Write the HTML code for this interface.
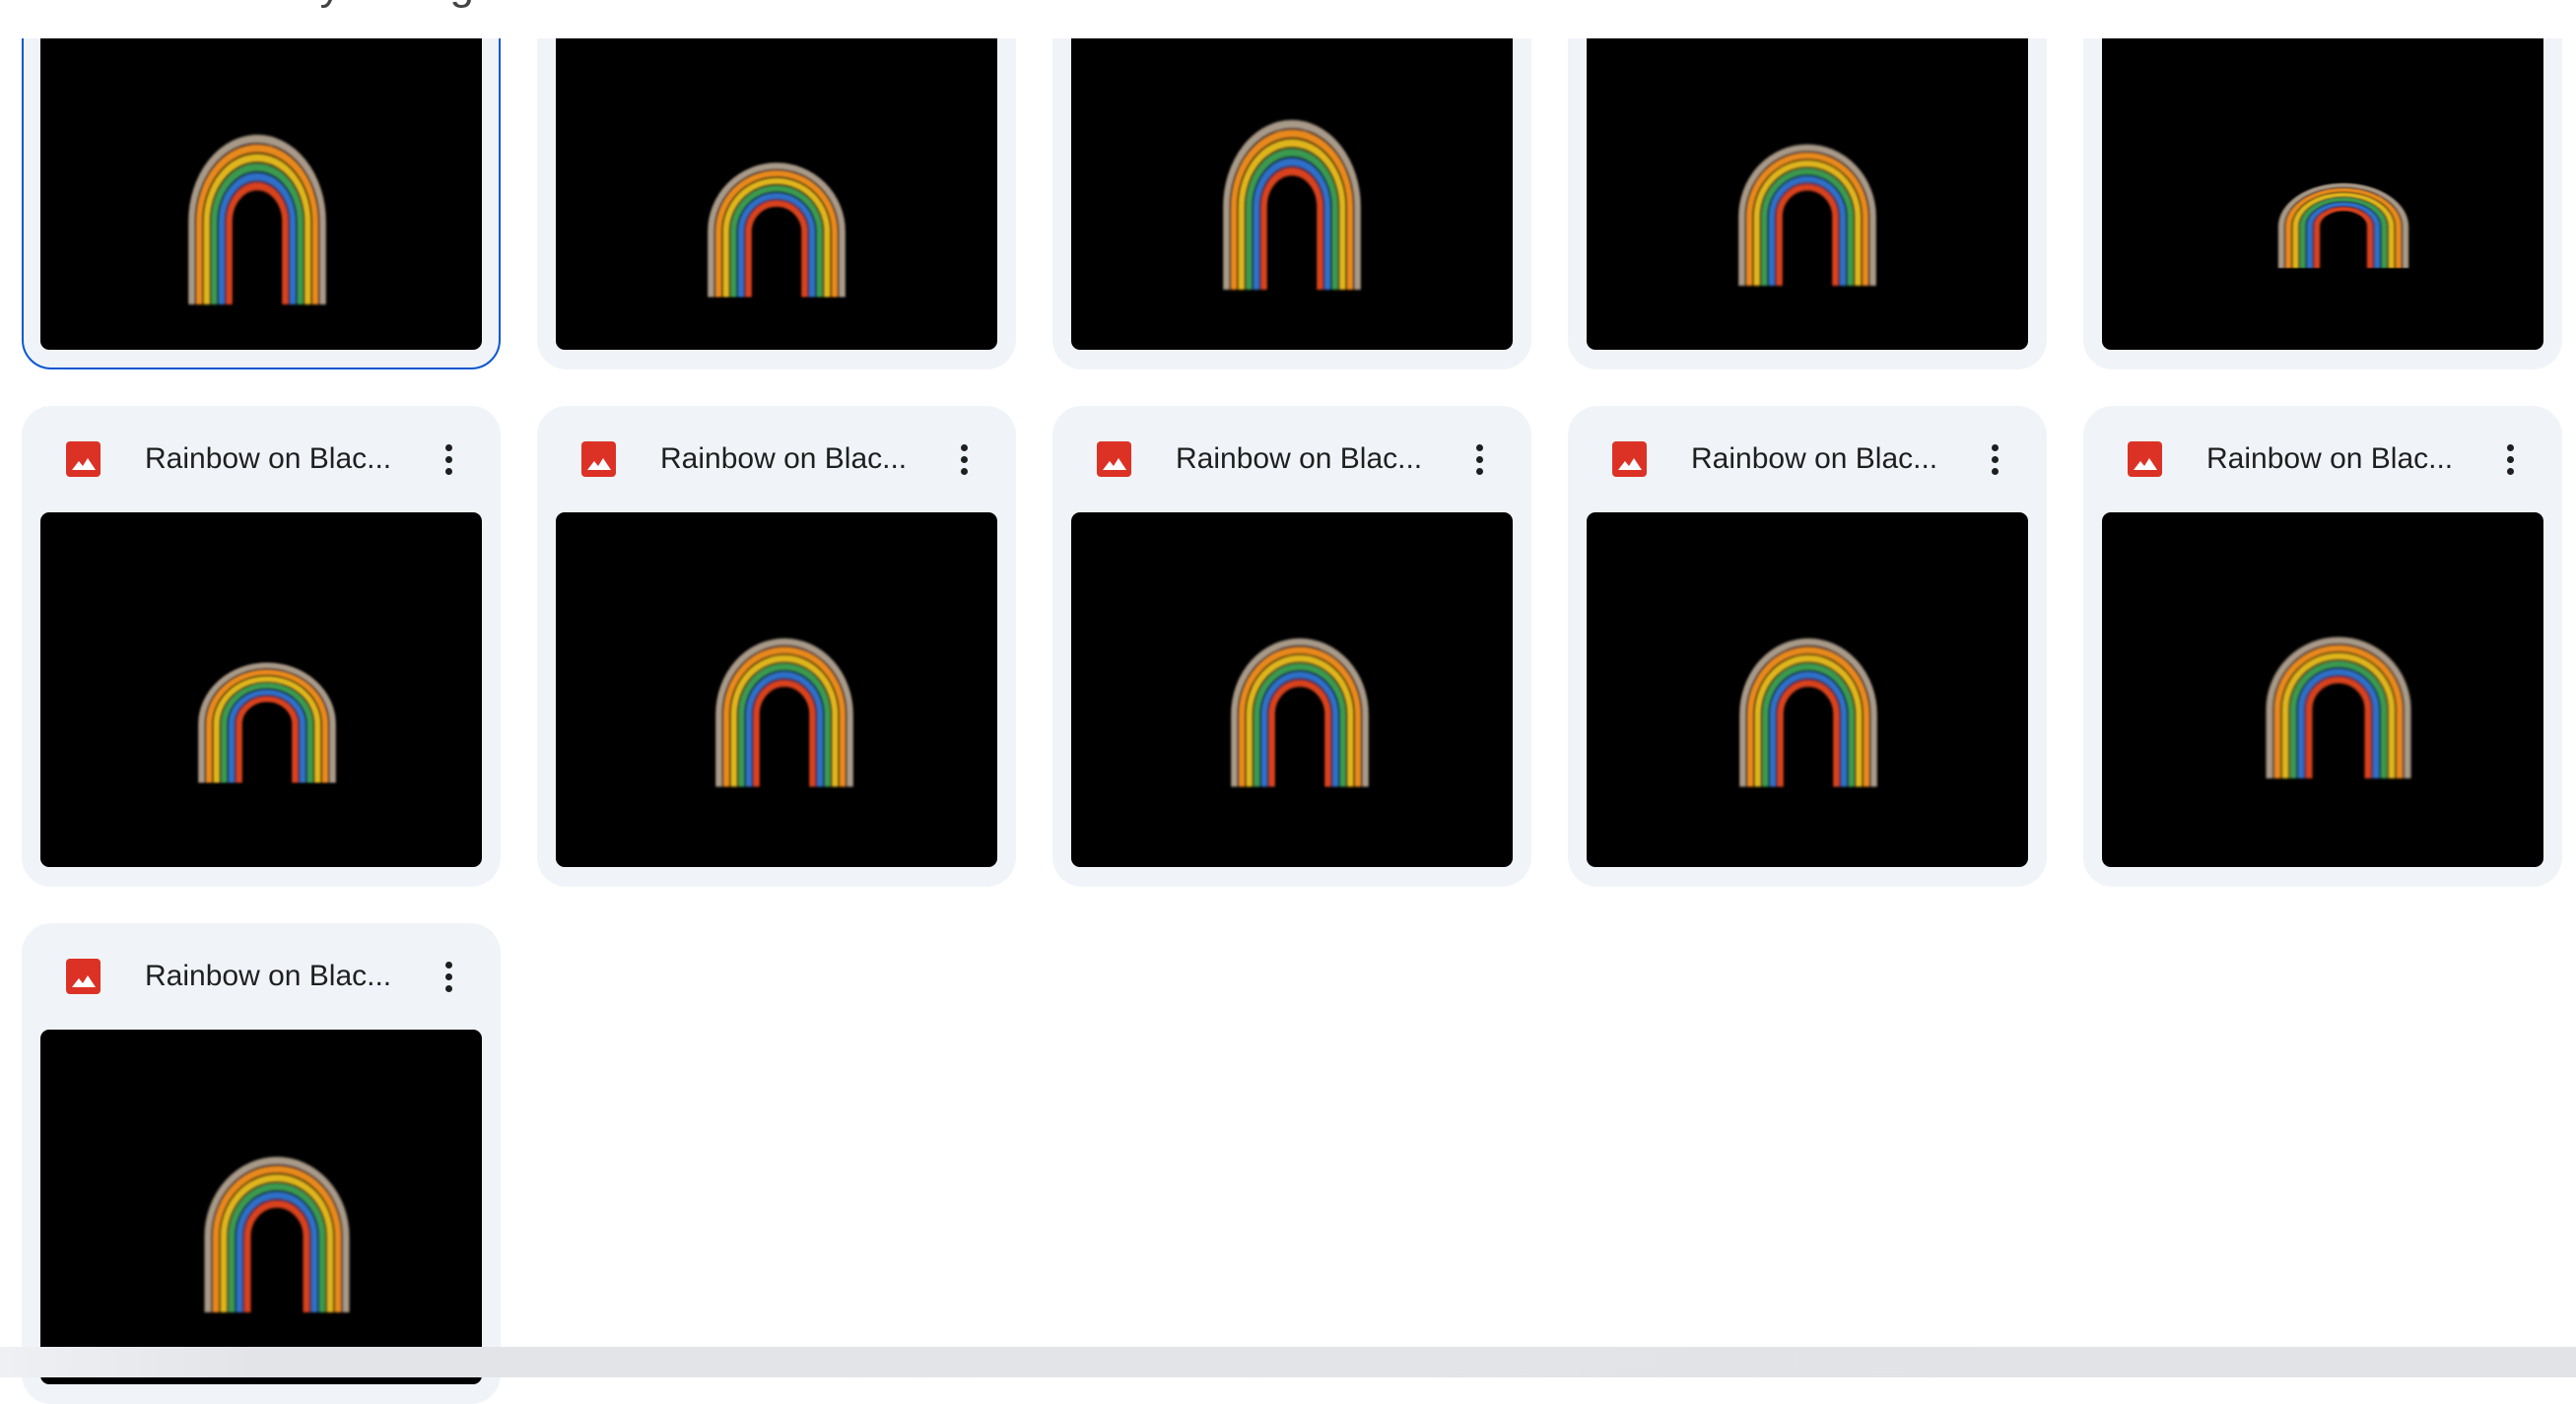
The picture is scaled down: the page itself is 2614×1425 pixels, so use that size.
<!DOCTYPE html>
<html><head><meta charset="utf-8"><style>
*{margin:0;padding:0;box-sizing:border-box}
html,body{width:2614px;height:1398px;overflow:hidden;background:#fff;font-family:"Liberation Sans",sans-serif}
.card{position:absolute;width:486px;height:488px;background:#f0f4f9;border-radius:30px}
.card.sel{border:2px solid #0b57d0}
.hdr{position:absolute;left:0;top:0;width:100%;height:108px}
.ico{position:absolute;left:45px;top:36px;width:35px;height:36px;background:#dc3226;border-radius:4px;overflow:hidden}
.ico svg{position:absolute;left:0;top:0}
.ttl{position:absolute;left:125px;top:36px;font-size:30px;color:#1f1f1f;line-height:36px;white-space:nowrap}
.dots{position:absolute;left:426px;top:36px;width:14px;height:36px}
.dots i{display:block;width:7px;height:7px;border-radius:50%;background:#1f1f1f;margin:3px auto 5px}
.img{position:absolute;left:19px;top:108px;width:448px;height:360px;background:#000;border-radius:9px;overflow:hidden}
.img svg{position:absolute;left:0;top:0}
.band{position:absolute;left:0;top:0;width:2614px;height:39px;background:#fff;z-index:5}
.bot{position:absolute;left:0;top:1367px;width:2614px;height:31px;background:linear-gradient(90deg,#eef0f3,#e3e4e8 10%,#e2e3e6);z-index:6}
</style></head><body>
<div class="band"><span style="position:absolute;left:300px;top:-40px;font-size:44px;color:#444">&nbsp;&nbsp;y&nbsp;&nbsp;&nbsp;&nbsp;&nbsp;&nbsp;&nbsp;&nbsp;&nbsp;g</span></div>
<svg width="0" height="0" style="position:absolute">
<defs>
<filter id="gl"><feGaussianBlur stdDeviation="1.2"/></filter>
<g id="rb" fill="none" stroke-width="7" filter="url(#gl)">
<path d="M-70 70 V0 A70 70 0 0 1 70 0 V70" stroke="#a89a88"/>
<path d="M-62 70 V0 A62 62 0 0 1 62 0 V70" stroke="#e8891a"/>
<path d="M-54 70 V0 A54 54 0 0 1 54 0 V70" stroke="#e0b51a"/>
<path d="M-46 70 V0 A46 46 0 0 1 46 0 V70" stroke="#3a9a50"/>
<path d="M-38 70 V0 A38 38 0 0 1 38 0 V70" stroke="#2f70c8"/>
<path d="M-30 70 V0 A30 30 0 0 1 30 0 V70" stroke="#d8421c"/>
</g>
<g id="ic"><path d="M6 29 L13 20 L17 25 L22 17 L30 29 Z" fill="#fff"/></g>
</defs>
</svg>

<!-- row 1 -->
<div class="card sel" style="left:22px;top:-113px"><div class="img" style="left:17px;top:106px"><svg width="448" height="360"><use href="#rb" transform="translate(220 230) scale(0.95 1.2)"/></svg></div></div>
<div class="card" style="left:545px;top:-113px"><div class="img"><svg width="448" height="360"><use href="#rb" transform="translate(224 240) scale(0.95 0.95)"/></svg></div></div>
<div class="card" style="left:1068px;top:-113px"><div class="img"><svg width="448" height="360"><use href="#rb" transform="translate(224 215) scale(0.95 1.2)"/></svg></div></div>
<div class="card" style="left:1591px;top:-113px"><div class="img"><svg width="448" height="360"><use href="#rb" transform="translate(224 225) scale(0.95 1.0)"/></svg></div></div>
<div class="card" style="left:2114px;top:-113px"><div class="img"><svg width="448" height="360"><use href="#rb" transform="translate(245 235) scale(0.9 0.6)"/></svg></div></div>

<!-- row 2 -->
<div class="card" style="left:22px;top:412px"><div class="hdr"><div class="ico"><svg width="35" height="36"><use href="#ic"/></svg></div><div class="ttl">Rainbow on Blac...</div><div class="dots"><i></i><i></i><i></i></div></div><div class="img"><svg width="448" height="360"><use href="#rb" transform="translate(230 215) scale(0.95 0.85)"/></svg></div></div>
<div class="card" style="left:545px;top:412px"><div class="hdr"><div class="ico"><svg width="35" height="36"><use href="#ic"/></svg></div><div class="ttl">Rainbow on Blac...</div><div class="dots"><i></i><i></i><i></i></div></div><div class="img"><svg width="448" height="360"><use href="#rb" transform="translate(232 205) scale(0.95 1.05)"/></svg></div></div>
<div class="card" style="left:1068px;top:412px"><div class="hdr"><div class="ico"><svg width="35" height="36"><use href="#ic"/></svg></div><div class="ttl">Rainbow on Blac...</div><div class="dots"><i></i><i></i><i></i></div></div><div class="img"><svg width="448" height="360"><use href="#rb" transform="translate(232 205) scale(0.95 1.05)"/></svg></div></div>
<div class="card" style="left:1591px;top:412px"><div class="hdr"><div class="ico"><svg width="35" height="36"><use href="#ic"/></svg></div><div class="ttl">Rainbow on Blac...</div><div class="dots"><i></i><i></i><i></i></div></div><div class="img"><svg width="448" height="360"><use href="#rb" transform="translate(225 205) scale(0.95 1.05)"/></svg></div></div>
<div class="card" style="left:2114px;top:412px"><div class="hdr"><div class="ico"><svg width="35" height="36"><use href="#ic"/></svg></div><div class="ttl">Rainbow on Blac...</div><div class="dots"><i></i><i></i><i></i></div></div><div class="img"><svg width="448" height="360"><use href="#rb" transform="translate(240 200) scale(1 1.0)"/></svg></div></div>

<!-- row 3 -->
<div class="card" style="left:22px;top:937px"><div class="hdr"><div class="ico"><svg width="35" height="36"><use href="#ic"/></svg></div><div class="ttl">Rainbow on Blac...</div><div class="dots"><i></i><i></i><i></i></div></div><div class="img"><svg width="448" height="360"><use href="#rb" transform="translate(240 210) scale(1 1.1)"/></svg></div></div>

<div class="bot"></div>
</body></html>
